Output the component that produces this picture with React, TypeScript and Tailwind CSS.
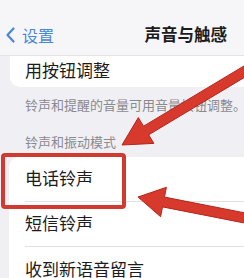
import React from "react";

const font = { fontFamily: '"Noto Sans CJK SC", "Noto Sans", sans-serif' };

const Header = () => (
  <div className="flex h-[56px] items-center justify-between border-b border-[#e4e4e8] bg-[#f6f6f8] pt-[14px] pl-[5px] pr-[17px]">
    <div className="flex items-center gap-[6px] text-[#4a86da]">
      <svg width="11" height="16" viewBox="0 0 11 16" fill="none">
        <path d="M8.5 1.5L2.5 8l6 6.5" stroke="currentColor" strokeWidth="2.2" strokeLinecap="round" strokeLinejoin="round" />
      </svg>
      <span className="text-[16px] leading-none">设置</span>
    </div>
    <span className="text-[16.5px] font-semibold leading-none text-[#1c1c1e]">声音与触感</span>
  </div>
);

const Row = ({ label, divider }: { label: string; divider?: boolean }) => (
  <div className="flex h-[45px] flex-col justify-center pl-[16px]">
    <div className="flex flex-1 items-center pb-[3px] text-[17px] leading-none text-[#1c1c1e]">{label}</div>
    {divider && <div className="h-px bg-[#e2e2e6]" />}
  </div>
);

const Arrows = () => (
  <svg className="pointer-events-none absolute inset-0" width="244" height="278" viewBox="0 0 244 278">
    <g fill="#d8392d" stroke="#b5261c" strokeWidth="1" strokeLinejoin="round">
      <polygon points="122,145 153.9,143.4 148.7,134.8 254.6,71.3 249.4,62.7 143.5,126.2 138.3,117.6" />
      <polygon points="138,197 166.4,187.3 164.5,197.1 251,214.1 249,223.9 162.5,206.9 160.6,216.7" />
    </g>
  </svg>
);

export default function App() {
  return (
    <div className="relative h-[278px] w-[244px] overflow-hidden bg-[#f0f0f4]" style={font}>
      <Header />
      <div className="ml-[10px] flex h-[31px] items-center rounded-bl-[10px] bg-white pl-[15px] pb-[4px] text-[17px] leading-none text-[#1c1c1e]">
        用按钮调整
      </div>
      <div className="whitespace-nowrap pl-[25px] pt-[9px] text-[13px] leading-[17px] text-[#8a8a8f]">
        铃声和提醒的音量可用音量按钮调整。
      </div>
      <div className="pl-[25px] pt-[20px] text-[13px] leading-[17px] text-[#8a8a8f]">铃声和振动模式</div>
      <div className="ml-[9px] mt-[7px] rounded-tl-[10px] bg-white">
        <Row label="电话铃声" divider />
        <Row label="短信铃声" divider />
        <Row label="收到新语音留言" />
      </div>
      <div className="absolute left-[1px] top-[153px] h-[56px] w-[125px] rounded-[4px] border-[4px] border-[#d13a30]" />
      <Arrows />
    </div>
  );
}
